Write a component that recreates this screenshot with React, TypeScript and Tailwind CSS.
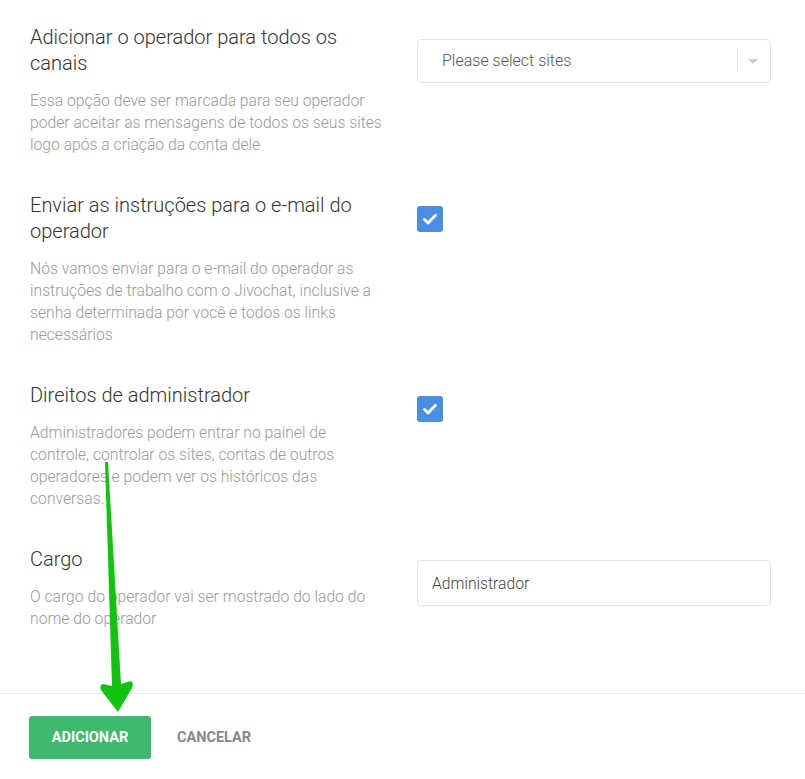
import { useState } from "react"

function Checkbox({ checked, onChange }: { checked: boolean; onChange: () => void }) {
  return (
    <button
      onClick={onChange}
      className={`w-[26px] h-[26px] rounded-[3px] flex items-center justify-center ${checked ? "bg-[#4a8ee2]" : "bg-white border border-gray-300"}`}
    >
      {checked && (
        <svg width="18" height="18" viewBox="0 0 18 18" fill="none">
          <path d="M3.5 9.5l3.6 3.4L14.5 5.3" stroke="white" strokeWidth="2.8" strokeLinecap="round" strokeLinejoin="round" />
        </svg>
      )}
    </button>
  )
}

function Row({ title, desc, children }: { title: string; desc: string; children: React.ReactNode }) {
  return (
    <div className="grid grid-cols-[356px_354px] gap-x-[31px] mb-[36px]">
      <div>
        <h3 className="text-[20px] leading-[26px] font-light text-[#333]">{title}</h3>
        <p className="mt-[14px] text-[15.7px] leading-[22px] font-light text-[#999]">{desc}</p>
      </div>
      <div className="pt-[14px]">{children}</div>
    </div>
  )
}

export default function App() {
  const [sendMail, setSendMail] = useState(true)
  const [admin, setAdmin] = useState(true)
  const [cargo, setCargo] = useState("Administrador")

  return (
    <div className="relative w-[805px] h-[779px] bg-white flex flex-col overflow-hidden" style={{ fontFamily: "Roboto, 'Liberation Sans', sans-serif" }}>
      <div className="flex-1 px-[30px] pt-[24px]">
        <Row
          title="Adicionar o operador para todos os canais"
          desc="Essa opção deve ser marcada para seu operador poder aceitar as mensagens de todos os seus sites logo após a criação da conta dele"
        >
          <div className="mt-[1px] h-[44px] border border-[#e3e3e3] rounded-[4px] flex items-center pl-[24px] pr-[12px]">
            <span className="flex-1 text-[16px] font-light text-[#555]">Please select sites</span>
            <div className="w-px h-[22px] bg-[#e3e3e3] mr-[10px]" />
            <div className="w-0 h-0 border-l-[5px] border-r-[5px] border-t-[5px] border-l-transparent border-r-transparent border-t-[#ccc]" />
          </div>
        </Row>

        <Row
          title="Enviar as instruções para o e-mail do operador"
          desc="Nós vamos enviar para o e-mail do operador as instruções de trabalho com o Jivochat, inclusive a senha determinada por você e todos os links necessários"
        >
          <Checkbox checked={sendMail} onChange={() => setSendMail(!sendMail)} />
        </Row>

        <Row
          title="Direitos de administrador"
          desc="Administradores podem entrar no painel de controle, controlar os sites, contas de outros operadores e podem ver os históricos das conversas."
        >
          <Checkbox checked={admin} onChange={() => setAdmin(!admin)} />
        </Row>

        <Row
          title="Cargo"
          desc="O cargo do operador vai ser mostrado do lado do nome do operador"
        >
          <input
            value={cargo}
            onChange={e => setCargo(e.target.value)}
            className="w-full h-[46px] border border-[#e3e3e3] rounded-[4px] px-[14px] text-[15.7px] font-light text-[#444] outline-none"
          />
        </Row>
      </div>

      <div className="h-[86px] border-t border-[#ebebeb] px-[29px] pt-[22px] flex items-start gap-[26px]">
        <button className="h-[43px] w-[122px] rounded-[3px] bg-[#3fba6c] text-white text-[14.5px] font-bold uppercase">
          Adicionar
        </button>
        <button className="h-[43px] text-[14.5px] font-bold uppercase text-[#888]">Cancelar</button>
      </div>

      <svg className="absolute left-0 top-0 pointer-events-none" width="805" height="779" viewBox="0 0 805 779">
        <path d="M105 462 L108 462 L121 684 L131 681 Q134 683 132 688 L118 712 L101 690 Q99 685 103 684 L112 686 Z" fill="#11c40f" />
      </svg>
    </div>
  )
}
